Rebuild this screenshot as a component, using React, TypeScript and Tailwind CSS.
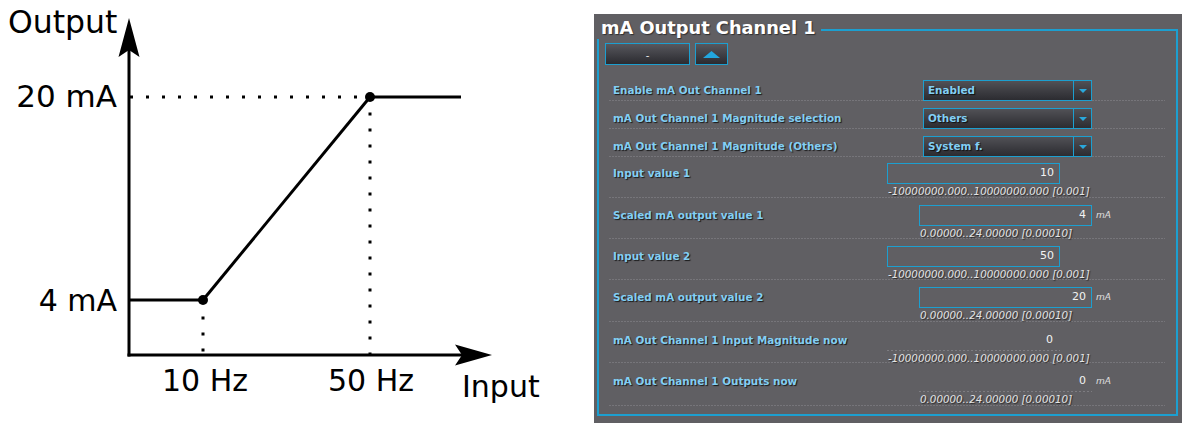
import React from "react";

const LBL =
  "font-bold text-[10.4px] text-[#82cff4] [text-shadow:1px_1px_1px_rgba(0,0,0,0.75)] whitespace-nowrap";
const RANGE =
  "italic text-[10.3px] leading-[14px] text-[#e4e4e4] [text-shadow:1px_1px_1px_rgba(0,0,0,0.6)] whitespace-nowrap pl-[1px]";
const SEP =
  "bg-[linear-gradient(to_right,#8c8b90_1px,transparent_1px)] bg-[length:3px_1px] bg-repeat-x bg-bottom";
const VALSEP =
  "bg-[linear-gradient(to_right,#9a999e_1px,transparent_1px)] bg-[length:4px_1px] bg-repeat-x bg-bottom";
const BOX =
  "flex h-[21px] w-[173px] items-center justify-end border border-[#1c9fd0] pr-[5px] text-[11px] text-[#f2f2f2]";
const UNIT = "ml-[4px] italic text-[9px] text-[#e0e0e0]";

function Row({
  h,
  pt,
  label,
  children,
}: {
  h: string;
  pt: string;
  label: string;
  children: React.ReactNode;
}) {
  return (
    <div className={`flex ${h} ${SEP}`}>
      <div className={`w-[278px] pl-[4px] ${pt}`}>
        <div className={`flex h-[21px] items-center ${LBL}`}>{label}</div>
      </div>
      <div className={pt}>{children}</div>
    </div>
  );
}

function Dropdown({ value }: { value: string }) {
  return (
    <div className="ml-[36px] flex h-[21px] w-[169px] border border-[#1c9fd0] bg-linear-to-b from-[#515156] to-[#2c2c31]">
      <div className={`flex flex-1 items-center pl-[4px] ${LBL}`}>{value}</div>
      <div className="flex w-[18px] items-center justify-center border-l border-[#1c9fd0]">
        <svg width="8" height="4" viewBox="0 0 8 4">
          <path d="M0 0H8L4 4Z" fill="#2aa8dc" />
        </svg>
      </div>
    </div>
  );
}

function InputField({ value }: { value: string }) {
  return (
    <div>
      <div className={BOX}>{value}</div>
      <div className={RANGE}>-10000000.000..10000000.000 [0.001]</div>
    </div>
  );
}

function ScaledField({ value }: { value: string }) {
  return (
    <div className="ml-[32px]">
      <div className="flex items-center">
        <div className={BOX}>{value}</div>
        <span className={UNIT}>mA</span>
      </div>
      <div className={RANGE}>0.00000..24.00000 [0.00010]</div>
    </div>
  );
}

function Chart() {
  return (
    <svg width="594" height="423" viewBox="0 0 594 423" className="block">
      <g fill="#000" fontFamily="DejaVu Sans, sans-serif" fontSize="30">
        <text x="8" y="33" fontSize="31.5">
          Output
        </text>
        <text x="117" y="107" textAnchor="end" fontSize="31">
          20 mA
        </text>
        <text x="117" y="311" textAnchor="end">
          4 mA
        </text>
        <text x="205" y="391" textAnchor="middle">
          10 Hz
        </text>
        <text x="371" y="391" textAnchor="middle">
          50 Hz
        </text>
        <text x="462" y="397">Input</text>
      </g>
      <g stroke="#000" strokeWidth="3" fill="none">
        <line x1="129" y1="356.5" x2="129" y2="50" />
        <line x1="127.5" y1="355" x2="462" y2="355" />
        <line x1="370" y1="97" x2="461" y2="97" />
        <line x1="370" y1="97" x2="203" y2="300" />
        <line x1="129" y1="300" x2="203" y2="300" />
        <line x1="130" y1="97" x2="368" y2="97" strokeDasharray="3 13" />
        <line x1="203" y1="316.5" x2="203" y2="356" strokeDasharray="3 13" />
        <line x1="370" y1="112.5" x2="370" y2="356" strokeDasharray="3 13" />
      </g>
      <path d="M129 18 L139.5 57 L129 50 L118.5 57 Z" fill="#000" />
      <path d="M492 355 L455 344.5 L462 355 L455 365.5 Z" fill="#000" />
      <circle cx="370" cy="97" r="5" fill="#000" />
      <circle cx="203" cy="300" r="5" fill="#000" />
    </svg>
  );
}

function Panel() {
  return (
    <div className="mt-[14px] h-[409px] w-[588px] bg-[#605f63] pl-[3px] pt-[15px]">
      <div className="relative h-[387px] w-[581px] border-2 border-[#1c9fd0]">
        <div className="absolute left-[-2px] top-[-15px] bg-[#605f63] pl-[4px] pr-[5px] text-[17.8px] font-bold leading-[23px] text-white [text-shadow:1px_1px_1px_rgba(0,0,0,0.5)]">
          mA Output Channel 1
        </div>
        <div className="flex pl-[6px] pt-[12px]">
          <div className="flex h-[22px] w-[85px] items-center justify-center border border-[#1c9fd0] bg-linear-to-b from-[#58585e] to-[#2b2b30] pt-[3px] text-[10px] text-[#e8e8e8]">
            -
          </div>
          <div className="ml-[5px] flex h-[22px] w-[33px] items-center justify-center border border-[#1c9fd0] bg-linear-to-b from-[#58585e] to-[#2b2b30]">
            <svg width="17" height="7" viewBox="0 0 17 7">
              <path d="M0 7L8.5 0L17 7Z" fill="#22a6de" />
            </svg>
          </div>
        </div>
        <div className="ml-[10px] mt-[9px] w-[556px]">
          <Row h="h-[27px]" pt="pt-[6px]" label="Enable mA Out Channel 1">
            <Dropdown value="Enabled" />
          </Row>
          <Row h="h-[28px]" pt="pt-[7px]" label="mA Out Channel 1 Magnitude selection">
            <Dropdown value="Others" />
          </Row>
          <Row h="h-[28px]" pt="pt-[7px]" label="mA Out Channel 1 Magnitude (Others)">
            <Dropdown value="System f." />
          </Row>
          <Row h="h-[41px]" pt="pt-[6px]" label="Input value 1">
            <InputField value="10" />
          </Row>
          <Row h="h-[41px]" pt="pt-[7px]" label="Scaled mA output value 1">
            <ScaledField value="4" />
          </Row>
          <Row h="h-[41px]" pt="pt-[7px]" label="Input value 2">
            <InputField value="50" />
          </Row>
          <Row h="h-[42px]" pt="pt-[7px]" label="Scaled mA output value 2">
            <ScaledField value="20" />
          </Row>
          <Row h="h-[41px]" pt="pt-[8px]" label="mA Out Channel 1 Input Magnitude now">
            <div>
              <div
                className={`flex h-[21px] w-[173px] items-center justify-end pr-[7px] text-[11px] text-[#f2f2f2] ${VALSEP}`}
              >
                0
              </div>
              <div className={RANGE}>-10000000.000..10000000.000 [0.001]</div>
            </div>
          </Row>
          <Row h="h-[43px]" pt="pt-[8px]" label="mA Out Channel 1 Outputs now">
            <div className="ml-[32px]">
              <div className="flex items-center">
                <div
                  className={`flex h-[21px] w-[173px] items-center justify-end pr-[6px] text-[11px] text-[#f2f2f2] ${VALSEP}`}
                >
                  0
                </div>
                <span className={UNIT}>mA</span>
              </div>
              <div className={RANGE}>0.00000..24.00000 [0.00010]</div>
            </div>
          </Row>
        </div>
      </div>
    </div>
  );
}

export default function App() {
  return (
    <div className="flex h-[423px] w-[1189px] overflow-hidden bg-white font-['DejaVu_Sans',sans-serif]">
      <div className="w-[594px] shrink-0">
        <Chart />
      </div>
      <Panel />
    </div>
  );
}
